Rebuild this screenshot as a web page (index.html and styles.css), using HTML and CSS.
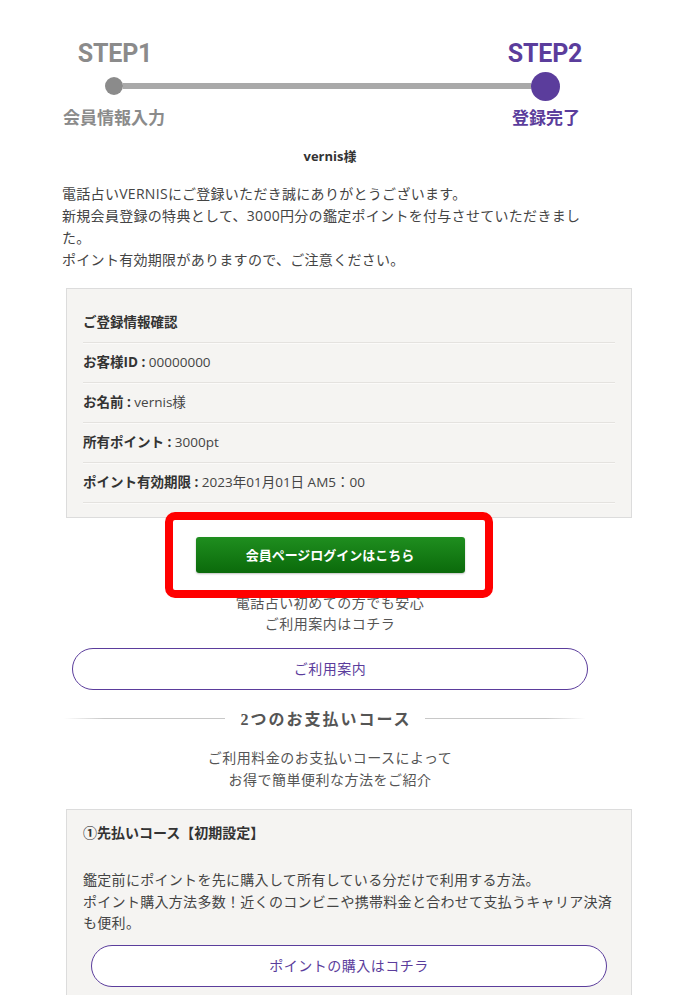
FILE: index.html
```html
<!DOCTYPE html>
<html lang="ja">
<head>
<meta charset="utf-8">
<title>登録完了</title>
<link rel="stylesheet" href="styles.css">
</head>
<body>
<main class="page">
  <section class="steps">
    <div class="step-head step-head--done">STEP1</div>
    <div class="step-head step-head--current">STEP2</div>
    <div class="track">
      <span class="dot dot--done"></span>
      <span class="track-line"></span>
      <span class="dot dot--current"></span>
    </div>
    <div class="step-label step-label--done">会員情報入力</div>
    <div class="step-label step-label--current">登録完了</div>
  </section>

  <p class="greeting">vernis様</p>

  <p class="intro">電話占いVERNISにご登録いただき誠にありがとうございます。<br>新規会員登録の特典として、3000円分の鑑定ポイントを付与させていただきました。<br>ポイント有効期限がありますので、ご注意ください。</p>

  <section class="panel info">
    <div class="info-row info-title">ご登録情報確認</div>
    <div class="info-row"><b>お客様ID :</b> 00000000</div>
    <div class="info-row"><b>お名前 :</b> vernis様</div>
    <div class="info-row"><b>所有ポイント :</b> 3000pt</div>
    <div class="info-row"><b>ポイント有効期限 :</b> 2023年01月01日 AM5：00</div>
  </section>

  <div class="login-wrap">
    <a class="btn-login" href="#">会員ページログインはこちら</a>
    <span class="highlight"></span>
  </div>

  <p class="center-text guide-text">電話占い初めての方でも安心<br>ご利用案内はコチラ</p>

  <a class="btn-outline btn-guide" href="#">ご利用案内</a>

  <h2 class="divider"><span class="divider-line divider-line--left"></span><span class="divider-text">2つのお支払いコース</span><span class="divider-line divider-line--right"></span></h2>

  <p class="center-text pay-text">ご利用料金のお支払いコースによって<br>お得で簡単便利な方法をご紹介</p>

  <section class="panel course">
    <h3 class="course-title">①先払いコース【初期設定】</h3>
    <p class="course-text">鑑定前にポイントを先に購入して所有している分だけで利用する方法。<br>ポイント購入方法多数！近くのコンビニや携帯料金と合わせて支払うキャリア決済も便利。</p>
    <a class="btn-outline btn-buy" href="#">ポイントの購入はコチラ</a>
  </section>
</main>
</body>
</html>
```

FILE: styles.css
```css
* { box-sizing: border-box; }

html, body {
  margin: 0;
  padding: 0;
  background: #fff;
}

body {
  font-family: "Open Sans", "Noto Sans CJK JP", sans-serif;
  font-size: 14px;
  color: #444;
  width: 696px;
  height: 995px;
  overflow: hidden;
}

.page {
  width: 536px;
  margin-left: 62px;
  padding-top: 40px;
}

/* ---------- steps ---------- */
.steps {
  display: grid;
  grid-template-columns: 104px 1fr 104px;
  grid-template-rows: 28px 28px 24px;
  row-gap: 4px;
}

.step-head {
  font-family: Roboto, "Liberation Sans", sans-serif;
  font-weight: 700;
  font-size: 25px;
  line-height: 28px;
  text-align: center;
  letter-spacing: -0.2px;
}
.step-head--done { grid-column: 1; grid-row: 1; color: #8b8b8b; padding-left: 2px; }
.step-head--current { grid-column: 3; grid-row: 1; color: #5b3d9c; padding-right: 2px; }

.track {
  grid-column: 1 / 4;
  grid-row: 2;
  display: flex;
  align-items: center;
  margin: 0 52px 0 52px;
}
.dot {
  display: block;
  border-radius: 50%;
  flex: none;
}
.dot--done {
  width: 18px;
  height: 18px;
  background: #8b8b8b;
  margin-left: -9px;
}
.dot--current {
  width: 29px;
  height: 29px;
  background: #5b3d9c;
  margin-right: -14px;
}
.track-line {
  flex: 1;
  height: 6px;
  background: #a9a9a9;
}

.step-label {
  font-family: "Noto Sans CJK JP", sans-serif;
  font-weight: 700;
  font-size: 17px;
  line-height: 24px;
  text-align: center;
  margin-top: 1px;
  white-space: nowrap;
}
.step-label--done { grid-column: 1; grid-row: 3; color: #8b8b8b; }
.step-label--current { grid-column: 3; grid-row: 3; color: #5b3d9c; }

/* ---------- text ---------- */
.greeting {
  margin: 17px 0 0;
  text-align: center;
  font-weight: 700;
  font-size: 13px;
  line-height: 22px;
  color: #333;
}

.intro {
  margin: 16px 0 0;
  font-size: 14px;
  line-height: 22px;
  width: 525px;
  letter-spacing: 0.3px;
}

/* ---------- panels ---------- */
.panel {
  background: #f5f4f2;
  border: 1px solid #dcdcdc;
  margin-left: 4px;
  width: 566px;
}

.info {
  margin-top: 17px;
  padding: 14px 16px;
}
.info-row {
  height: 40px;
  line-height: 39px;
  border-bottom: 1px solid #e4e2df;
  box-shadow: 0 1px 0 #fbfaf9;
  font-size: 13.5px;
  color: #444;
}
.info-row b {
  font-weight: 700;
  color: #333;
}
.info-title {
  font-weight: 700;
  color: #333;
}

/* ---------- login button ---------- */
.login-wrap {
  position: relative;
  width: 269px;
  margin: 19px auto 0;
}
.btn-login {
  display: block;
  height: 36px;
  line-height: 36px;
  text-align: center;
  color: #fff;
  font-weight: 700;
  font-size: 13px;
  text-decoration: none;
  border-radius: 3px;
  background: linear-gradient(#1f8e1f, #0b6a0b);
  box-shadow: 0 1px 2px rgba(0,0,0,0.25);
}
.highlight {
  position: absolute;
  left: -31px;
  right: -28px;
  top: -25px;
  bottom: -25px;
  border: 8px solid #ff0000;
  border-radius: 10px;
  z-index: 2;
  pointer-events: none;
}

.center-text {
  text-align: center;
  margin: 0;
  color: #555;
  line-height: 21px;
  letter-spacing: 0.5px;
}
.guide-text {
  margin-top: 19px;
}

/* ---------- outline buttons ---------- */
.btn-outline {
  display: block;
  height: 42px;
  line-height: 40px;
  text-align: center;
  border: 1px solid #5b3d9c;
  border-radius: 21px;
  color: #5b3d9c;
  text-decoration: none;
  font-size: 14px;
  background: #fff;
  letter-spacing: 0.5px;
}
.btn-guide {
  width: 516px;
  margin: 14px auto 0;
}

/* ---------- divider ---------- */
.divider {
  display: flex;
  align-items: center;
  margin: 16px 12px 0 0;
  height: 24px;
  font-family: "Liberation Serif", "Noto Sans CJK JP", serif;
  font-weight: 700;
  font-size: 16px;
  color: #555;
  letter-spacing: 2px;
}
.divider-line {
  flex: 1;
  height: 1px;
}
.divider-line--left {
  margin-left: 2px;
  background: linear-gradient(to right, rgba(200,200,200,0), #c8c8c8 25%);
}
.divider-line--right {
  background: linear-gradient(to left, rgba(200,200,200,0), #c8c8c8 25%);
}
.divider-text {
  padding: 0 13px 0 15px;
}

.pay-text {
  margin-top: 17px;
  line-height: 22px;
}

/* ---------- course ---------- */
.course {
  margin-top: 18px;
  padding: 12px 16px 20px;
}
.course-title {
  margin: 0;
  font-size: 14px;
  line-height: 22px;
  font-weight: 700;
  color: #333;
}
.course-text {
  margin: 25px 0 0;
  font-size: 14px;
  line-height: 21.5px;
  letter-spacing: 0.3px;
}
.btn-buy {
  margin: 11px 8px 0;
}
```
